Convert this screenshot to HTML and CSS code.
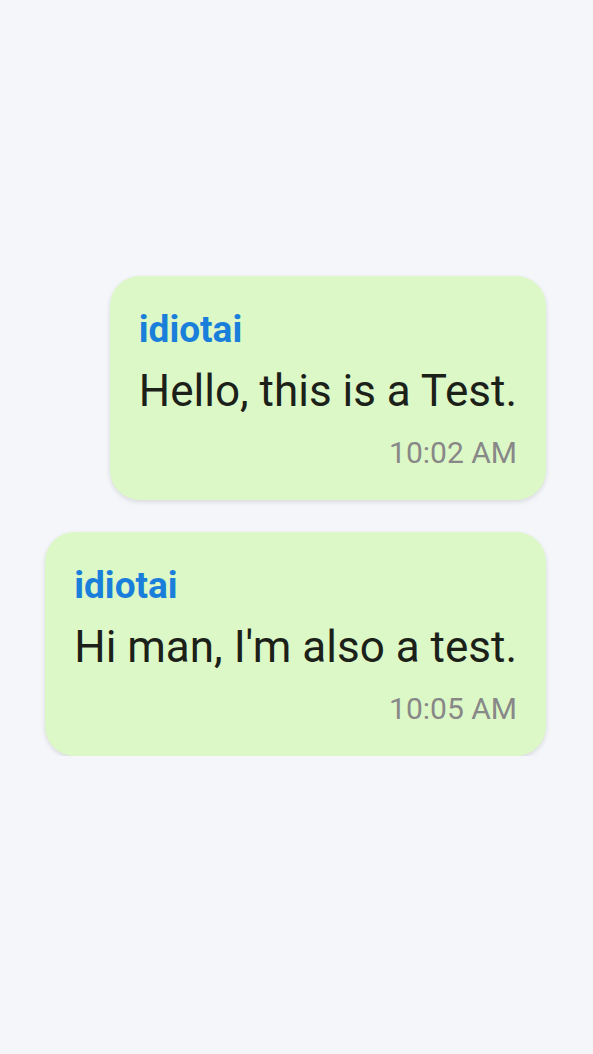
FILE: index.html
```html
<!DOCTYPE html>
<html lang="en">
<head>
<meta charset="utf-8">
<link rel="stylesheet" href="styles.css">
</head>
<body>
<div class="chat">
    <div class="bubble">
        <div class="name">idiotai</div>
        <div class="text">Hello, this is a Test.</div>
        <div class="time">10:02 AM</div>
    </div>
    <div class="bubble">
        <div class="name">idiotai</div>
        <div class="text">Hi man, I'm also a test.</div>
        <div class="time">10:05 AM</div>
    </div>
</div>
</body>
</html>
```
FILE: styles.css
```css
body {margin:0; background:#f5f6fa; font-family:Roboto, "Liberation Sans", sans-serif;}
.chat {display:flex; flex-direction:column; align-items:flex-end; gap:32px; padding:276px 47px 0 0;}
.bubble {display:flex; flex-direction:column; background:#dcf8c6; border-radius:30px; padding:28px 29px 21px; box-shadow:0 2px 5px rgba(0,0,0,0.12);}
.name {color:#1a7fdb; font-weight:bold; font-size:37px; line-height:52px;}
.text {color:#1b2119; font-size:44px; line-height:70px;}
.time {color:#888; font-size:30px; line-height:53px; text-align:right;}
```
